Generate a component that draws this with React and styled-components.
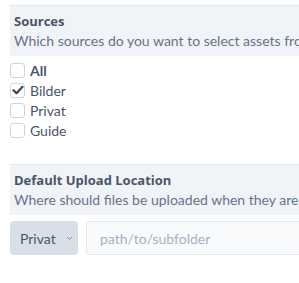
import React from "react";
import styled, { createGlobalStyle } from "styled-components";

const Global = createGlobalStyle`
  html, body { margin: 0; padding: 0; background: #fff; overflow: hidden; }
  body { font-family: Lato, "Open Sans", sans-serif; }
`;

const Page = styled.div`
  width: 420px;
  padding: 5px 10px;
  display: flex;
  flex-direction: column;
`;

const Section = styled.section`
  display: flex;
  flex-direction: column;
  margin-bottom: ${(p) => p.$mb || 0}px;
`;

const Header = styled.div`
  background: #f0f3f7;
  border-top: 1px solid #e2e7ee;
  padding: 6px 4px 5px;
`;

const Title = styled.div`
  font-family: "Open Sans", sans-serif;
  font-size: 13px;
  font-weight: 700;
  line-height: 19px;
  color: #4a5568;
`;

const Desc = styled.div`
  font-size: 14px;
  line-height: 20px;
  color: #67738a;
  white-space: nowrap;
`;

const List = styled.div`
  display: flex;
  flex-direction: column;
  padding-top: 4px;
`;

const Row = styled.label`
  display: flex;
  align-items: center;
  gap: 5px;
  height: 20px;
  font-size: 14px;
  color: #4a5568;
  font-weight: ${(p) => (p.$bold ? 700 : 400)};
`;

const Box = styled.span`
  flex: none;
  width: 15px;
  height: 15px;
  box-sizing: border-box;
  border: 1px solid #cdd5df;
  border-radius: 3px;
  background: #fff;
  display: flex;
  align-items: center;
  justify-content: center;
`;

const Controls = styled.div`
  display: flex;
  gap: 8px;
  margin-top: 6px;
`;

const Select = styled.div`
  flex: none;
  width: 68px;
  height: 34px;
  box-sizing: border-box;
  border-radius: 4px;
  background: #d9dfe9;
  display: flex;
  align-items: center;
  padding-left: 10px;
  gap: 10px;
  font-size: 14px;
  color: #4a5568;
`;

const Input = styled.input`
  flex: 1;
  height: 34px;
  box-sizing: border-box;
  border: 1px solid #e2e7ee;
  border-radius: 4px;
  background: #f9fafc;
  padding: 0 13px;
  font-family: inherit;
  font-size: 14px;
  color: #4a5568;
  outline: none;
  &::placeholder { color: #a7b0bf; }
`;

const Check = () => (
  <svg width="12" height="10" viewBox="0 0 12 10">
    <path d="M1.5 5.2 L4.5 8.2 L10.5 1.8" fill="none" stroke="#3b4250" strokeWidth="2.2" strokeLinecap="round" strokeLinejoin="round" />
  </svg>
);

const Chevron = () => (
  <svg width="7" height="5" viewBox="0 0 7 5">
    <path d="M1 1 L3.5 3.5 L6 1" fill="none" stroke="#8a94a6" strokeWidth="1" />
  </svg>
);

const sources = [
  { name: "All", bold: true, checked: false },
  { name: "Bilder", checked: true },
  { name: "Privat", checked: false },
  { name: "Guide", checked: false },
];

export default function App() {
  return (
    <>
      <Global />
      <Page>
        <Section $mb={24}>
          <Header>
            <Title>Sources</Title>
            <Desc>Which sources do you want to select assets from?</Desc>
          </Header>
          <List>
            {sources.map((s) => (
              <Row key={s.name} $bold={s.bold}>
                <Box>{s.checked && <Check />}</Box>
                {s.name}
              </Row>
            ))}
          </List>
        </Section>
        <Section>
          <Header>
            <Title>Default Upload Location</Title>
            <Desc>Where should files be uploaded when they are added?</Desc>
          </Header>
          <Controls>
            <Select>
              Privat <Chevron />
            </Select>
            <Input placeholder="path/to/subfolder" />
          </Controls>
        </Section>
      </Page>
    </>
  );
}
